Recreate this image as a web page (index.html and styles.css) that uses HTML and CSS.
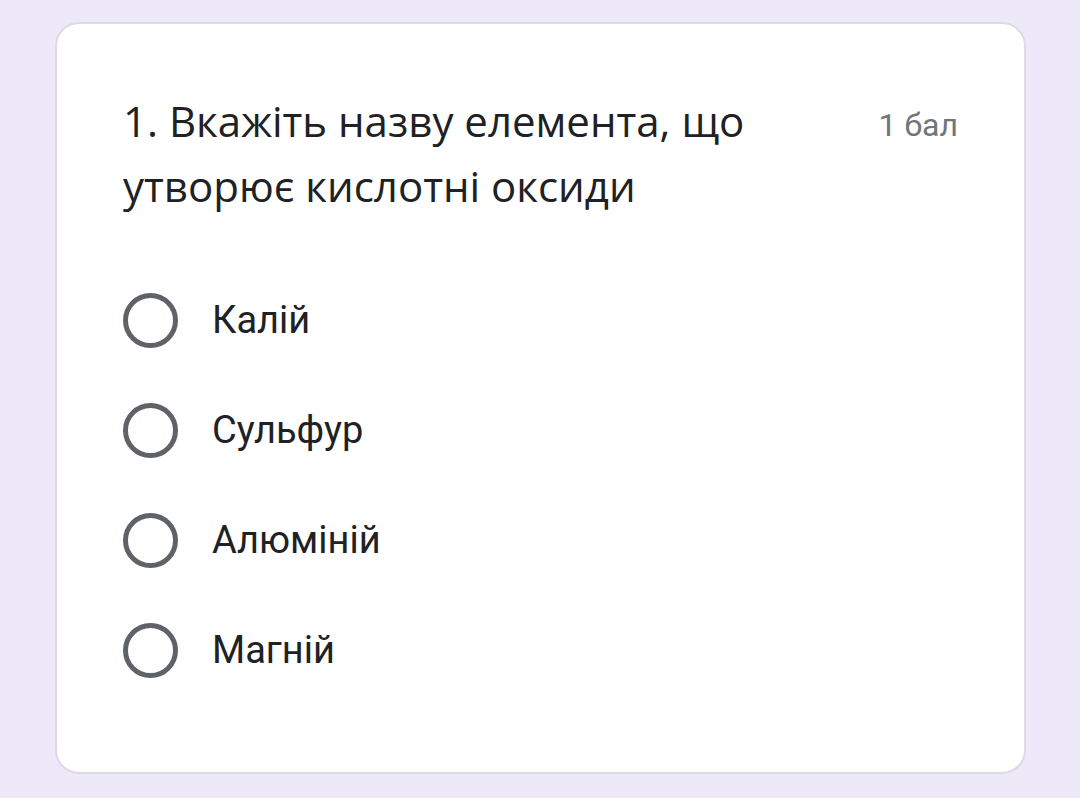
FILE: index.html
```html
<!DOCTYPE html>
<html lang="uk">
<head>
	<meta charset="UTF-8">
	<title>Тест</title>
	<link rel="stylesheet" href="styles.css">
</head>
<body>
	<div class="card">
		<div class="head">
			<div class="question">1. Вкажіть назву елемента, що утворює кислотні оксиди</div>
			<div class="points">1 бал</div>
		</div>
		<ul class="options">
			<li><span class="radio"></span>Калій</li>
			<li><span class="radio"></span>Сульфур</li>
			<li><span class="radio"></span>Алюміній</li>
			<li><span class="radio"></span>Магній</li>
		</ul>
	</div>
</body>
</html>
```

FILE: styles.css
```css
*{
	margin: 0;
	padding: 0;
	box-sizing: border-box;
}
body{
	background: #ede9f8;
	padding: 22px 54px 24px 55px;
	height: 798px;
}
.card{
	background: #fff;
	border: 2px solid #dcdae2;
	border-radius: 24px;
	height: 752px;
	padding: 64px 66px 0 66px;
}
.head{
	display: flex;
	justify-content: space-between;
	align-items: flex-start;
}
.question{
	width: 680px;
	font: 42px/65px "Open Sans", "Noto Sans", sans-serif;
	color: #202124;
}
.points{
	font: 32px/40px Roboto, sans-serif;
	color: #70757a;
	padding-top: 17px;
}
.options{
	list-style: none;
	margin-top: 47px;
}
.options li{
	display: flex;
	align-items: center;
	height: 110px;
	font: 38px Roboto, sans-serif;
	color: #202124;
}
.radio{
	width: 55px;
	height: 55px;
	border: 5px solid #5f6368;
	border-radius: 50%;
	margin-right: 34px;
}
```
